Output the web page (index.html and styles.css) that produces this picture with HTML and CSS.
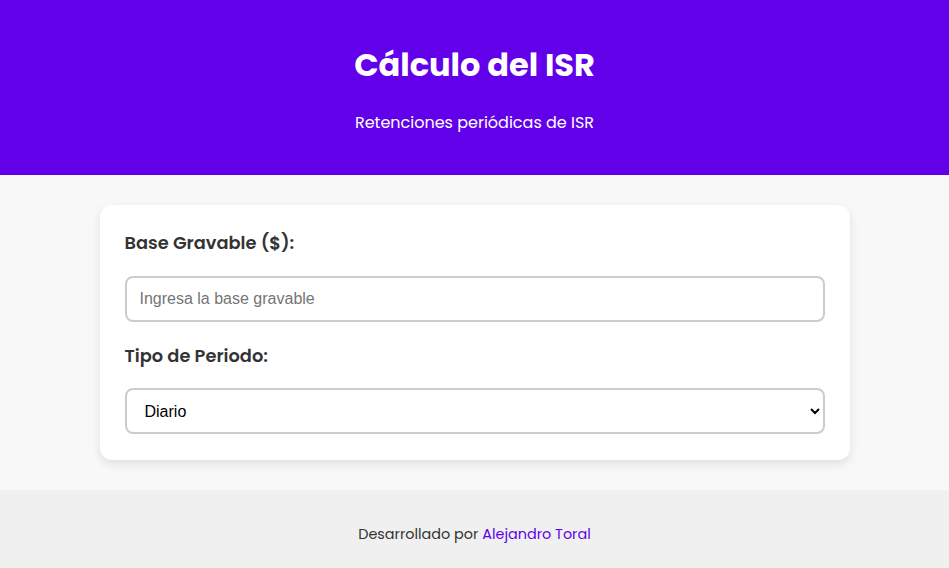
FILE: index.html
```html
<!DOCTYPE html>
<html lang="es">
<head>
<meta charset="utf-8">
<title>Cálculo del ISR</title>
<link rel="stylesheet" href="styles.css">
</head>
<body>
<header class="hero">
  <h1 class="hero-title">Cálculo del ISR</h1>
  <p class="hero-sub">Retenciones periódicas de ISR</p>
</header>
<main class="main">
  <section class="card">
    <label class="label" for="base">Base Gravable ($):</label>
    <input class="field" id="base" type="number" placeholder="Ingresa la base gravable">
    <label class="label" for="periodo">Tipo de Periodo:</label>
    <select class="field select" id="periodo">
      <option>Diario</option>
      <option>Semanal</option>
      <option>Quincenal</option>
      <option>Mensual</option>
    </select>
  </section>
</main>
<footer class="footer">
  <p>Desarrollado por <a class="footer-link" href="#">Alejandro Toral</a></p>
</footer>
</body>
</html>
```

FILE: styles.css
```css
* { box-sizing: border-box; }
html, body { margin: 0; padding: 0; }
body {
  font-family: "Poppins", "Lato", "Open Sans", sans-serif;
  background: #f8f8f8;
  color: #333;
}
.hero {
  background: #6200ea;
  color: #fff;
  text-align: center;
  height: 175px;
  padding-top: 41px;
}
.hero-title {
  margin: 0;
  font-size: 32px;
  font-weight: 700;
  line-height: 48px;
}
.hero-sub {
  margin: 22px 0 0;
  font-size: 16px;
  line-height: 24px;
}
.main {
  padding: 30px 0;
  display: flex;
  justify-content: center;
}
.card {
  width: 750px;
  background: #fff;
  border-radius: 12px;
  box-shadow: 0 4px 10px rgba(0,0,0,0.1);
  padding: 24px 25px 26px;
  display: flex;
  flex-direction: column;
}
.label {
  font-weight: 600;
  font-size: 17.8px;
  line-height: 28px;
  color: #333;
}
.field {
  margin: 19px 0 20px;
  height: 46px;
  width: 100%;
  border: 2px solid #ccc;
  border-radius: 8px;
  padding: 0 13px;
  font-family: "Liberation Sans", Arial, sans-serif;
  font-size: 16px;
  background: #fff;
  color: #000;
}
.field::placeholder { color: #757575; }
.select { margin: 18px 0 0; padding: 0 14px; }
.footer {
  background: #f0f0f0;
  height: 78px;
  display: flex;
  align-items: center;
  justify-content: center;
  padding-top: 11px;
  font-size: 14.4px;
  color: #333;
}
.footer p { margin: 0; }
.footer-link { color: #6200ea; text-decoration: none; }
```
